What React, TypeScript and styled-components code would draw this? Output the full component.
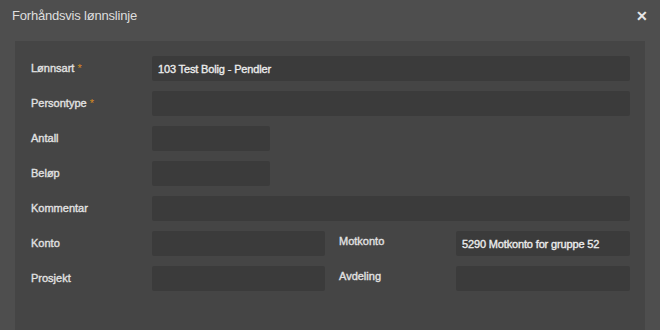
import React from "react";
import styled, { createGlobalStyle } from "styled-components";

const Global = createGlobalStyle`
  html, body { margin: 0; padding: 0; background: #4e4e4e; }
  body { font-family: "Liberation Sans", Arial, sans-serif; }
`;

const Dialog = styled.div`
  width: 660px;
  height: 330px;
  background: #4e4e4e;
  display: flex;
  flex-direction: column;
  box-sizing: border-box;
  overflow: hidden;
`;

const Header = styled.div`
  height: 30px;
  display: flex;
  align-items: center;
  justify-content: space-between;
  padding: 0 12px 0 12px;
  color: #dcdcdc;
`;

const Title = styled.h1`
  margin: 0;
  font-size: 13px;
  font-weight: normal;
  letter-spacing: -0.2px;
  color: #dedede;
`;

const Close = styled.span`
  font-size: 14px;
  font-weight: bold;
  color: #e6e6e6;
  line-height: 1;
  margin-top: 2px;
`;

const Body = styled.div`
  flex: 1;
  padding: 11px 15px 0 15px;
  display: flex;
`;

const Panel = styled.div`
  flex: 1;
  background: #454545;
  padding: 15px 15px 0 16px;
`;

const Form = styled.div`
  display: grid;
  grid-template-columns: 121px 173px 131px 174px;
  grid-auto-rows: 25px;
  row-gap: 10px;
  align-items: center;
`;

const Label = styled.label<{ $indent?: boolean }>`
  font-size: 11px;
  color: #e2e2e2;
  -webkit-text-stroke: 0.35px #e2e2e2;
  padding-left: ${(p) => (p.$indent ? "14px" : "0")};
  margin-top: ${(p) => (p.$indent ? "-5px" : "-2px")};
`;

const Req = styled.span`
  color: #d98a1f;
  -webkit-text-stroke: 0;
  margin-left: 3px;
`;

const Input = styled.div<{ $span?: number; $width?: number }>`
  grid-column: span ${(p) => p.$span ?? 1};
  ${(p) => (p.$width ? `width: ${p.$width}px;` : "")}
  height: 25px;
  background: #3b3b3b;
  border-radius: 2px;
  box-sizing: border-box;
  padding-left: 6px;
  display: flex;
  align-items: center;
  font-size: 11px;
  color: #ececec;
  -webkit-text-stroke: 0.35px #ececec;
  letter-spacing: -0.15px;
`;

export default function App() {
  return (
    <>
      <Global />
      <Dialog>
        <Header>
          <Title>Forhåndsvis lønnslinje</Title>
          <Close>✕</Close>
        </Header>
        <Body>
          <Panel>
            <Form>
              <Label>
                Lønnsart<Req>*</Req>
              </Label>
              <Input $span={3}>103 Test Bolig - Pendler</Input>

              <Label>
                Persontype<Req>*</Req>
              </Label>
              <Input $span={3} />

              <Label>Antall</Label>
              <Input $span={3} $width={118} />

              <Label>Beløp</Label>
              <Input $span={3} $width={118} />

              <Label>Kommentar</Label>
              <Input $span={3} />

              <Label>Konto</Label>
              <Input />
              <Label $indent>Motkonto</Label>
              <Input>5290 Motkonto for gruppe 52</Input>

              <Label>Prosjekt</Label>
              <Input />
              <Label $indent>Avdeling</Label>
              <Input />
            </Form>
          </Panel>
        </Body>
      </Dialog>
    </>
  );
}
